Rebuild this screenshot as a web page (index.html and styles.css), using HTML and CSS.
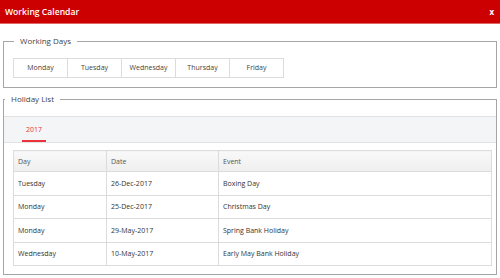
FILE: index.html
```html
<!DOCTYPE html>
<html lang="en">
<head>
    <meta charset="UTF-8">
    <title>Working Calendar</title>
    <link rel="stylesheet" href="styles.css">
</head>
<body>

    <!-- Title bar -->
    <div class="titlebar">
        <span class="title">Working Calendar</span>
        <span class="close">x</span>
    </div>

    <!-- Working days -->
    <fieldset class="group days-group">
        <legend>Working Days</legend>
        <div class="days">
            <div class="day">Monday</div>
            <div class="day">Tuesday</div>
            <div class="day">Wednesday</div>
            <div class="day">Thursday</div>
            <div class="day">Friday</div>
        </div>
    </fieldset>

    <!-- Holidays -->
    <fieldset class="group holiday-group">
        <legend>Holiday List</legend>
        <div class="tabs">
            <div class="tab active">2017</div>
        </div>
        <table class="holidays">
            <thead>
                <tr><th class="col-day">Day</th><th class="col-date">Date</th><th>Event</th></tr>
            </thead>
            <tbody>
                <tr><td>Tuesday</td><td>26-Dec-2017</td><td>Boxing Day</td></tr>
                <tr><td>Monday</td><td>25-Dec-2017</td><td>Christmas Day</td></tr>
                <tr><td>Monday</td><td>29-May-2017</td><td>Spring Bank Holiday</td></tr>
                <tr><td>Wednesday</td><td>10-May-2017</td><td>Early May Bank Holiday</td></tr>
            </tbody>
        </table>
    </fieldset>

</body>
</html>
```

FILE: styles.css
```css
body {
    margin: 0;
    background: #fff;
    font-family: 'Open Sans', sans-serif;
    font-size: 7px;
    color: #333;
    width: 500px;
    height: 278px;
    overflow: hidden;
}

.titlebar {
    height: 23px;
    background: #cc0000;
    border-bottom: 1px solid #e06666;
    display: flex;
    align-items: center;
    justify-content: space-between;
    padding: 0 6px 0 5px;
    color: #fff;
}

.title {
    font-size: 8.6px;
    font-weight: 600;
}

.close {
    font-size: 8px;
    font-weight: 700;
    margin-top: -1px;
}

.group {
    border: 1px solid #a6a6a6;
    margin: 0 3px;
    min-width: 0;
}

.group legend {
    font-size: 8px;
    line-height: 12px;
    color: #444;
    padding: 0 6px;
    margin-left: 1px;
}

.days-group {
    margin-top: 11px;
    padding: 11px 9px 9px 9px;
}

.days {
    display: flex;
}

.day {
    width: 53px;
    height: 18px;
    line-height: 18px;
    text-align: center;
    border: 1px solid #dcdcdc;
    margin-left: -1px;
    color: #444;
    background: #fff;
}

.day:first-child {
    margin-left: 0;
}

.holiday-group {
    margin-top: 5px;
    padding: 11px 0 8px 0;
}

.tabs {
    height: 25px;
    background: #f4f5f7;
    border-top: 1px solid #e2e2e2;
    border-bottom: 1px solid #e2e2e2;
    display: flex;
    padding-left: 18px;
}

.tab {
    padding: 0 4px;
    line-height: 25px;
    color: #e8343a;
}

.tab.active {
    border-bottom: 2px solid #e8343a;
    height: 23px;
    line-height: 26px;
}

.holidays {
    width: 479px;
    margin: 7px 0 0 9px;
    border-collapse: collapse;
}

.holidays th,
.holidays td {
    border: 1px solid #dcdcdc;
    text-align: left;
    padding: 0 4px;
    font-weight: normal;
}

.holidays th {
    height: 20px;
    color: #555;
    background: linear-gradient(#f9f9f9, #efefef);
}

.holidays td {
    height: 22.5px;
    color: #333;
}

.col-day {
    width: 84px;
}

.col-date {
    width: 103px;
}
```
